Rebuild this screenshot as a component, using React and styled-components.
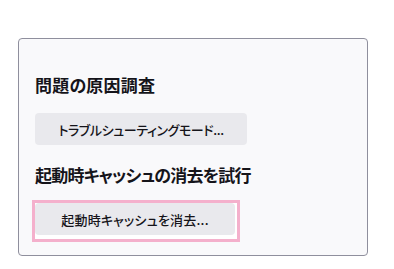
import React from "react";
import styled, { createGlobalStyle } from "styled-components";

const Global = createGlobalStyle`
  html, body { margin: 0; padding: 0; background: #ffffff; }
  body {
    font-family: "Noto Sans CJK JP", "Noto Sans", sans-serif;
    color: #15141a;
  }
`;

const Page = styled.div`
  padding: 38px 0 0 18px;
`;

const Card = styled.section`
  box-sizing: border-box;
  width: 350px;
  height: 218px;
  background: #f9f9fb;
  border: 1px solid #8f8f9d;
  border-radius: 4px;
  padding: 34px 16px 0 16px;
  display: flex;
  flex-direction: column;
  align-items: flex-start;
`;

const Heading = styled.h2`
  margin: 0 0 ${(p) => p.$gap}px 0;
  font-size: 17px;
  line-height: 24px;
  font-weight: 600;
  font-feature-settings: "palt";
  letter-spacing: ${(p) => p.$spacing}px;
`;

const Button = styled.button`
  box-sizing: border-box;
  width: ${(p) => p.$width}px;
  height: 32px;
  border: none;
  border-radius: 4px;
  background: #e9e9ed;
  color: #15141a;
  font-family: "Noto Sans CJK JP", "Noto Sans", sans-serif;
  font-size: 13px;
  font-weight: 500;
  font-feature-settings: "palt";
  letter-spacing: ${(p) => p.$spacing || 0}px;
  padding: 0;
  margin: 0 0 ${(p) => p.$gap || 0}px 0;
  display: inline-flex;
  align-items: center;
  justify-content: center;
  white-space: nowrap;
`;

const Highlight = styled.div`
  display: inline-flex;
  border: 3px solid #f4b0cc;
  padding: 0 2px 4px 0;
  background: #ffffff;
  margin-left: -3px;
`;

export default function App() {
  return (
    <>
      <Global />
      <Page>
        <Card>
          <Heading $gap={16} $spacing={0.2}>問題の原因調査</Heading>
          <Button $width={212} $spacing={-0.4} $gap={18}>
            トラブルシューティングモード...
          </Button>
          <Heading $gap={13} $spacing={-0.8}>起動時キャッシュの消去を試行</Heading>
          <Highlight>
            <Button $width={200} $spacing={0.2}>起動時キャッシュを消去...</Button>
          </Highlight>
        </Card>
      </Page>
    </>
  );
}
